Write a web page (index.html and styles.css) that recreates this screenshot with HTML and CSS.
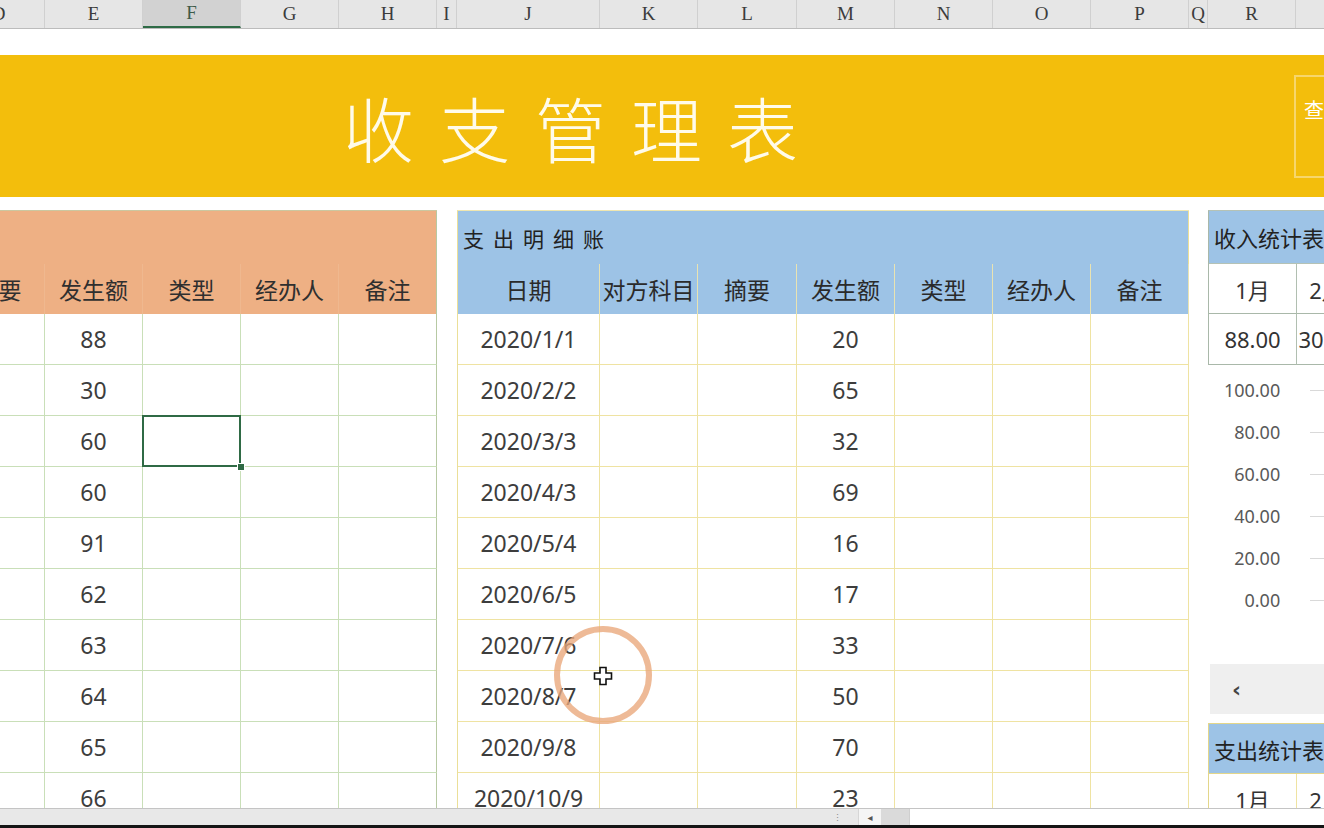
FILE: index.html
```html
<!DOCTYPE html>
<html lang="zh-CN">
<head>
<meta charset="utf-8">
<title>收支管理表</title>
<link rel="stylesheet" href="styles.css">
</head>
<body>
<div class="colheads">
  <div class="ch w92">D</div>
  <div class="ch w98">E</div>
  <div class="ch w98 ch-sel">F</div>
  <div class="ch w98">G</div>
  <div class="ch w98">H</div>
  <div class="ch w20">I</div>
  <div class="ch w143">J</div>
  <div class="ch w98">K</div>
  <div class="ch w99">L</div>
  <div class="ch w98">M</div>
  <div class="ch w98">N</div>
  <div class="ch w98">O</div>
  <div class="ch w98">P</div>
  <div class="ch w19">Q</div>
  <div class="ch w88">R</div>
  <div class="ch w120"></div>
</div>

<div class="sheet">
  <div class="banner">
    <div class="banner-title">收支管理表</div>
    <div class="query">查询</div>
  </div>

  <div class="tables">
    <div class="inc-grid">
      <div class="c inc-title"></div>
      <div class="c inc-head">摘要</div>
      <div class="c inc-head">发生额</div>
      <div class="c inc-head">类型</div>
      <div class="c inc-head">经办人</div>
      <div class="c inc-head inc-last">备注</div>

      <div class="c inc"></div><div class="c inc num">88</div><div class="c inc"></div><div class="c inc"></div><div class="c inc inc-last"></div>
      <div class="c inc"></div><div class="c inc num">30</div><div class="c inc"></div><div class="c inc"></div><div class="c inc inc-last"></div>
      <div class="c inc"></div><div class="c inc num">60</div><div class="c inc sel"><span class="handle"></span></div><div class="c inc"></div><div class="c inc inc-last"></div>
      <div class="c inc"></div><div class="c inc num">60</div><div class="c inc"></div><div class="c inc"></div><div class="c inc inc-last"></div>
      <div class="c inc"></div><div class="c inc num">91</div><div class="c inc"></div><div class="c inc"></div><div class="c inc inc-last"></div>
      <div class="c inc"></div><div class="c inc num">62</div><div class="c inc"></div><div class="c inc"></div><div class="c inc inc-last"></div>
      <div class="c inc"></div><div class="c inc num">63</div><div class="c inc"></div><div class="c inc"></div><div class="c inc inc-last"></div>
      <div class="c inc"></div><div class="c inc num">64</div><div class="c inc"></div><div class="c inc"></div><div class="c inc inc-last"></div>
      <div class="c inc"></div><div class="c inc num">65</div><div class="c inc"></div><div class="c inc"></div><div class="c inc inc-last"></div>
      <div class="c inc"></div><div class="c inc num">66</div><div class="c inc"></div><div class="c inc"></div><div class="c inc inc-last"></div>
    </div>

    <div class="exp-grid">
      <div class="c exp-title">支出明细账</div>
      <div class="c exp-head">日期</div>
      <div class="c exp-head">对方科目</div>
      <div class="c exp-head">摘要</div>
      <div class="c exp-head">发生额</div>
      <div class="c exp-head">类型</div>
      <div class="c exp-head">经办人</div>
      <div class="c exp-head">备注</div>

      <div class="c exp num">2020/1/1</div><div class="c exp"></div><div class="c exp"></div><div class="c exp num">20</div><div class="c exp"></div><div class="c exp"></div><div class="c exp"></div>
      <div class="c exp num">2020/2/2</div><div class="c exp"></div><div class="c exp"></div><div class="c exp num">65</div><div class="c exp"></div><div class="c exp"></div><div class="c exp"></div>
      <div class="c exp num">2020/3/3</div><div class="c exp"></div><div class="c exp"></div><div class="c exp num">32</div><div class="c exp"></div><div class="c exp"></div><div class="c exp"></div>
      <div class="c exp num">2020/4/3</div><div class="c exp"></div><div class="c exp"></div><div class="c exp num">69</div><div class="c exp"></div><div class="c exp"></div><div class="c exp"></div>
      <div class="c exp num">2020/5/4</div><div class="c exp"></div><div class="c exp"></div><div class="c exp num">16</div><div class="c exp"></div><div class="c exp"></div><div class="c exp"></div>
      <div class="c exp num">2020/6/5</div><div class="c exp"></div><div class="c exp"></div><div class="c exp num">17</div><div class="c exp"></div><div class="c exp"></div><div class="c exp"></div>
      <div class="c exp num">2020/7/6</div><div class="c exp"></div><div class="c exp"></div><div class="c exp num">33</div><div class="c exp"></div><div class="c exp"></div><div class="c exp"></div>
      <div class="c exp num">2020/8/7</div><div class="c exp"></div><div class="c exp"></div><div class="c exp num">50</div><div class="c exp"></div><div class="c exp"></div><div class="c exp"></div>
      <div class="c exp num">2020/9/8</div><div class="c exp"></div><div class="c exp"></div><div class="c exp num">70</div><div class="c exp"></div><div class="c exp"></div><div class="c exp"></div>
      <div class="c exp num">2020/10/9</div><div class="c exp"></div><div class="c exp"></div><div class="c exp num">23</div><div class="c exp"></div><div class="c exp"></div><div class="c exp"></div>
    </div>

    <div class="panel">
      <div class="stat-grid">
        <div class="c stat-title">收入统计表</div>
        <div class="c stat">1月</div><div class="c stat">2月</div>
        <div class="c stat num">88.00</div><div class="c stat num">30.00</div>
      </div>
      <div class="chart">
        <div class="axis-row"><span class="axis-label">100.00</span><span class="axis-line"></span></div>
        <div class="axis-row"><span class="axis-label">80.00</span><span class="axis-line"></span></div>
        <div class="axis-row"><span class="axis-label">60.00</span><span class="axis-line"></span></div>
        <div class="axis-row"><span class="axis-label">40.00</span><span class="axis-line"></span></div>
        <div class="axis-row"><span class="axis-label">20.00</span><span class="axis-line"></span></div>
        <div class="axis-row"><span class="axis-label">0.00</span><span class="axis-line"></span></div>
      </div>
      <div class="slider"><span class="slider-arrow">‹</span></div>
      <div class="stat2-grid">
        <div class="c stat2-title">支出统计表</div>
        <div class="c stat2">1月</div><div class="c stat2">2月</div>
      </div>
    </div>
  </div>
</div>

<div class="bottombar">
  <div class="tabs-area"><span class="grip">⋮</span></div>
  <div class="scroll-btn">◂</div>
  <div class="scroll-thumb"></div>
  <div class="scroll-track"></div>
</div>

<div class="cursor-ring"></div>
<svg class="cursor-plus" width="20" height="20" viewBox="0 0 20 20">
  <path d="M7 1.5 H13 V7 H18.5 V13 H13 V18.5 H7 V13 H1.5 V7 H7 Z" fill="#fff" stroke="#111" stroke-width="1.6" stroke-linejoin="miter"/>
</svg>
</body>
</html>
```

FILE: styles.css
```css
html, body {
  margin: 0;
  padding: 0;
}
body {
  width: 1324px;
  height: 828px;
  overflow: hidden;
  position: relative;
  display: flex;
  flex-direction: column;
  background: #ffffff;
  font-family: "Noto Sans", "Noto Sans CJK SC", sans-serif;
  color: #333333;
}

/* ---------- column letters ---------- */
.colheads {
  display: flex;
  flex-shrink: 0;
  height: 29px;
  margin-left: -47px;
  background: #e6e6e6;
  border-bottom: 1px solid #bcbcbc;
  box-sizing: border-box;
}
.ch {
  flex-shrink: 0;
  box-sizing: border-box;
  border-right: 1px solid #d0d0d0;
  display: flex;
  align-items: center;
  justify-content: center;
  font-family: "Liberation Serif", serif;
  font-size: 19px;
  color: #3c3c3c;
}
.ch-sel {
  background: #d2d2d2;
  border-bottom: 2px solid #2e6b46;
  color: #3d5a48;
}
.w19 { width: 19px; }
.w20 { width: 20px; }
.w88 { width: 88px; }
.w92 { width: 92px; }
.w98 { width: 98px; }
.w99 { width: 99px; }
.w120 { width: 120px; }
.w143 { width: 143px; }

/* ---------- sheet ---------- */
.sheet {
  flex-shrink: 0;
  height: 779px;
  box-sizing: border-box;
  padding-top: 26px;
  overflow: hidden;
}
.banner {
  height: 142px;
  background: #f3be0c;
  display: flex;
  align-items: center;
}
.banner-title {
  flex-shrink: 0;
  margin-left: 343px;
  font-family: "Noto Sans CJK SC", sans-serif;
  font-weight: 300;
  font-size: 71px;
  line-height: 1;
  letter-spacing: 25px;
  color: #fffbea;
}
.query {
  flex-shrink: 0;
  align-self: flex-start;
  margin-top: 20px;
  margin-left: 471px;
  width: 90px;
  height: 103px;
  box-sizing: border-box;
  border: 2px solid #f7d66c;
  padding: 21px 0 0 8px;
  font-family: "Noto Sans CJK SC", sans-serif;
  font-size: 20px;
  line-height: 1.2;
  color: #ffffff;
}

.tables {
  display: flex;
  align-items: flex-start;
  margin-top: 13px;
}

/* generic cell */
.c {
  box-sizing: border-box;
  display: flex;
  align-items: center;
  justify-content: center;
  font-size: 23px;
  white-space: nowrap;
  overflow: hidden;
}
.num {
  font-family: "Noto Sans", sans-serif;
  color: #3d3d3d;
}

/* ---------- income table (left) ---------- */
.inc-grid {
  flex-shrink: 0;
  margin-left: -47px;
  display: grid;
  grid-template-columns: 92px 98px 98px 98px 98px;
  grid-template-rows: 53px 50px repeat(10, 51px);
  border-top: 1px solid #cbc7a0;
}
.inc-title {
  grid-column: 1 / -1;
  background: #eeb084;
  border-right: 1px solid #b7c9a3;
}
.inc-head {
  background: #eeb084;
  border-right: 1px solid #efb88f;
  color: #2f2f2f;
}
.inc {
  border-right: 1px solid #c9dfb8;
  border-bottom: 1px solid #c9dfb8;
}
.inc-last {
  border-right: 1px solid #b7c9a3;
}
.sel {
  position: relative;
  overflow: visible;
}
.sel::after {
  content: "";
  position: absolute;
  left: -1px;
  top: -1px;
  right: -1px;
  bottom: -1px;
  border: 2px solid #2f6a45;
}
.handle {
  position: absolute;
  right: -5px;
  bottom: -5px;
  width: 6px;
  height: 6px;
  background: #2f6a45;
  border: 1px solid #ffffff;
  z-index: 2;
}

/* ---------- expense table (middle) ---------- */
.exp-grid {
  flex-shrink: 0;
  margin-left: 20px;
  display: grid;
  grid-template-columns: 142px 98px 99px 98px 98px 98px 98px;
  grid-template-rows: 53px 50px repeat(10, 51px);
  border-left: 1px solid #ebdf98;
  border-top: 1px solid #efe6b0;
}
.exp-title {
  grid-column: 1 / -1;
  justify-content: flex-start;
  padding-left: 5px;
  background: #9dc3e6;
  border-right: 1px solid #ebdf98;
  font-family: "Noto Sans CJK SC", sans-serif;
  font-size: 21px;
  letter-spacing: 9px;
  color: #222222;
}
.exp-head {
  background: #9dc3e6;
  border-right: 1px solid #e9e3b2;
  color: #2a2a2a;
}
.exp {
  border-right: 1px solid #efe3a2;
  border-bottom: 1px solid #efe3a2;
}

/* ---------- right panel ---------- */
.panel {
  flex-shrink: 0;
  margin-left: 19px;
  width: 160px;
}
.stat-grid {
  display: grid;
  grid-template-columns: 88px 60px;
  grid-template-rows: 53px 50px 51px;
  border-left: 1px solid #a9b8a9;
  border-top: 1px solid #b5c2b5;
}
.stat-title {
  grid-column: 1 / -1;
  justify-content: flex-start;
  padding-left: 5px;
  background: #9dc3e6;
  font-family: "Noto Sans CJK SC", sans-serif;
  font-size: 22px;
  color: #222222;
  border-bottom: 1px solid #b5c2b5;
}
.stat {
  border-right: 1px solid #b1bfb1;
  border-bottom: 1px solid #a9b8a9;
  font-size: 22px;
  color: #333333;
}
.chart {
  height: 299px;
  box-sizing: border-box;
  padding-top: 4px;
}
.axis-row {
  display: flex;
  align-items: center;
  height: 42px;
}
.axis-label {
  width: 75px;
  text-align: right;
  font-family: "Noto Sans", sans-serif;
  font-size: 18px;
  color: #595959;
}
.axis-line {
  margin-left: 30px;
  width: 60px;
  height: 1px;
  background: #d9d9d9;
}
.slider {
  height: 50px;
  margin-left: 2px;
  background: #efefef;
  display: flex;
  align-items: center;
  padding-left: 22px;
}
.slider-arrow {
  font-family: "DejaVu Sans", sans-serif;
  font-weight: bold;
  font-size: 22px;
  color: #444444;
}
.stat2-grid {
  margin-top: 9px;
  display: grid;
  grid-template-columns: 88px 60px;
  grid-template-rows: 50px 51px;
  border-left: 1px solid #e3d68a;
  border-top: 1px solid #e3d68a;
}
.stat2-title {
  grid-column: 1 / -1;
  justify-content: flex-start;
  padding-left: 5px;
  background: #9dc3e6;
  font-family: "Noto Sans CJK SC", sans-serif;
  font-size: 22px;
  color: #222222;
  border-bottom: 1px solid #e3d68a;
}
.stat2 {
  border-right: 1px solid #efe3a2;
  border-bottom: 1px solid #efe3a2;
  font-size: 22px;
  color: #333333;
}

/* ---------- bottom bar ---------- */
.bottombar {
  flex-shrink: 0;
  height: 20px;
  box-sizing: border-box;
  display: flex;
  border-top: 1px solid #c4c4c4;
  border-bottom: 3px solid #151515;
  background: #e8e8e8;
}
.tabs-area {
  width: 858px;
  display: flex;
  justify-content: flex-end;
  align-items: center;
  padding-right: 16px;
  box-sizing: border-box;
}
.grip {
  font-size: 9px;
  line-height: 1;
  color: #8a8a8a;
}
.scroll-btn {
  width: 22px;
  background: #f5f5f5;
  border-left: 1px solid #d6d6d6;
  display: flex;
  align-items: center;
  justify-content: center;
  font-family: "DejaVu Sans", sans-serif;
  font-size: 10px;
  color: #555555;
}
.scroll-thumb {
  width: 28px;
  background: #dadada;
}
.scroll-track {
  flex: 1;
  background: #ffffff;
  border-left: 1px solid #cfcfcf;
}

/* ---------- overlays (screen recording cursor) ---------- */
.cursor-ring {
  position: absolute;
  left: 554px;
  top: 626px;
  width: 98px;
  height: 98px;
  box-sizing: border-box;
  border-radius: 50%;
  border: 6px solid rgba(233, 166, 122, 0.78);
}
.cursor-plus {
  position: absolute;
  left: 593px;
  top: 666px;
}
```
